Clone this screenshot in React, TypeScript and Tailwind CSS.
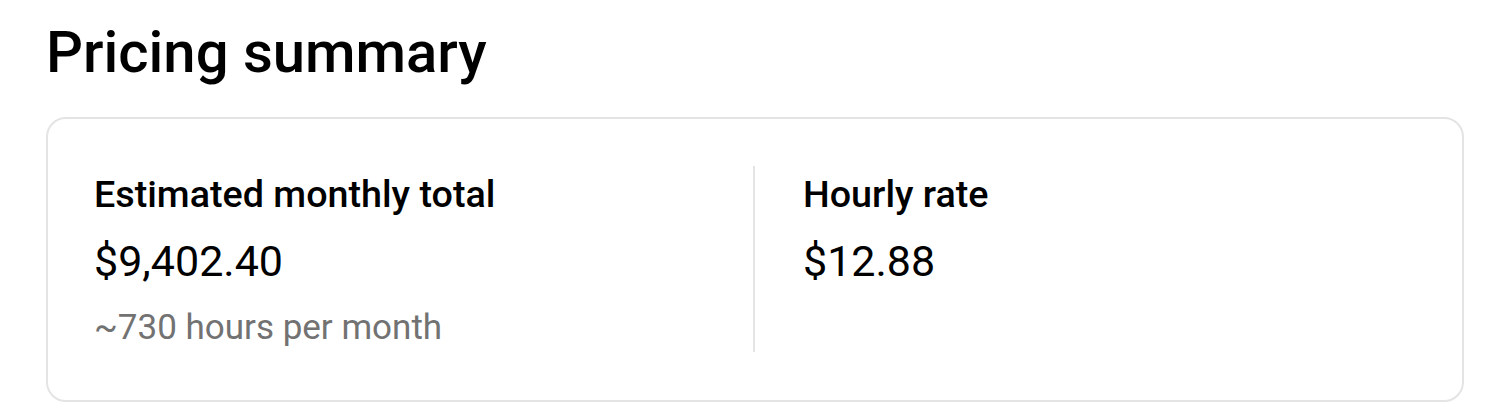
export default function App() {
  return (
    <div className="min-h-screen bg-white pl-[46px] pr-[36px] pt-[20px] font-['Roboto',sans-serif] text-black">
      <h1 className="text-[58px] font-medium leading-[64px]">Pricing summary</h1>
      <section className="mt-[33px] rounded-[20px] border-2 border-[#e4e4e4] pl-[46px] pr-[50px] pt-[47px] pb-[48px]">
        <div className="grid grid-cols-2">
          <div className="flex flex-col">
            <span className="text-[37.7px] font-medium leading-[56px]">Estimated monthly total</span>
            <span className="mt-[14px] text-[43px] leading-[50px]">$9,402.40</span>
            <span className="mt-[18px] text-[35px] leading-[48px] text-[#727272]">~730 hours per month</span>
          </div>
          <div className="flex flex-col border-l-2 border-[#e4e4e4] pl-12">
            <span className="text-[37.7px] font-medium leading-[56px]">Hourly rate</span>
            <span className="mt-[14px] text-[43px] leading-[50px]">$12.88</span>
          </div>
        </div>
      </section>
    </div>
  );
}
